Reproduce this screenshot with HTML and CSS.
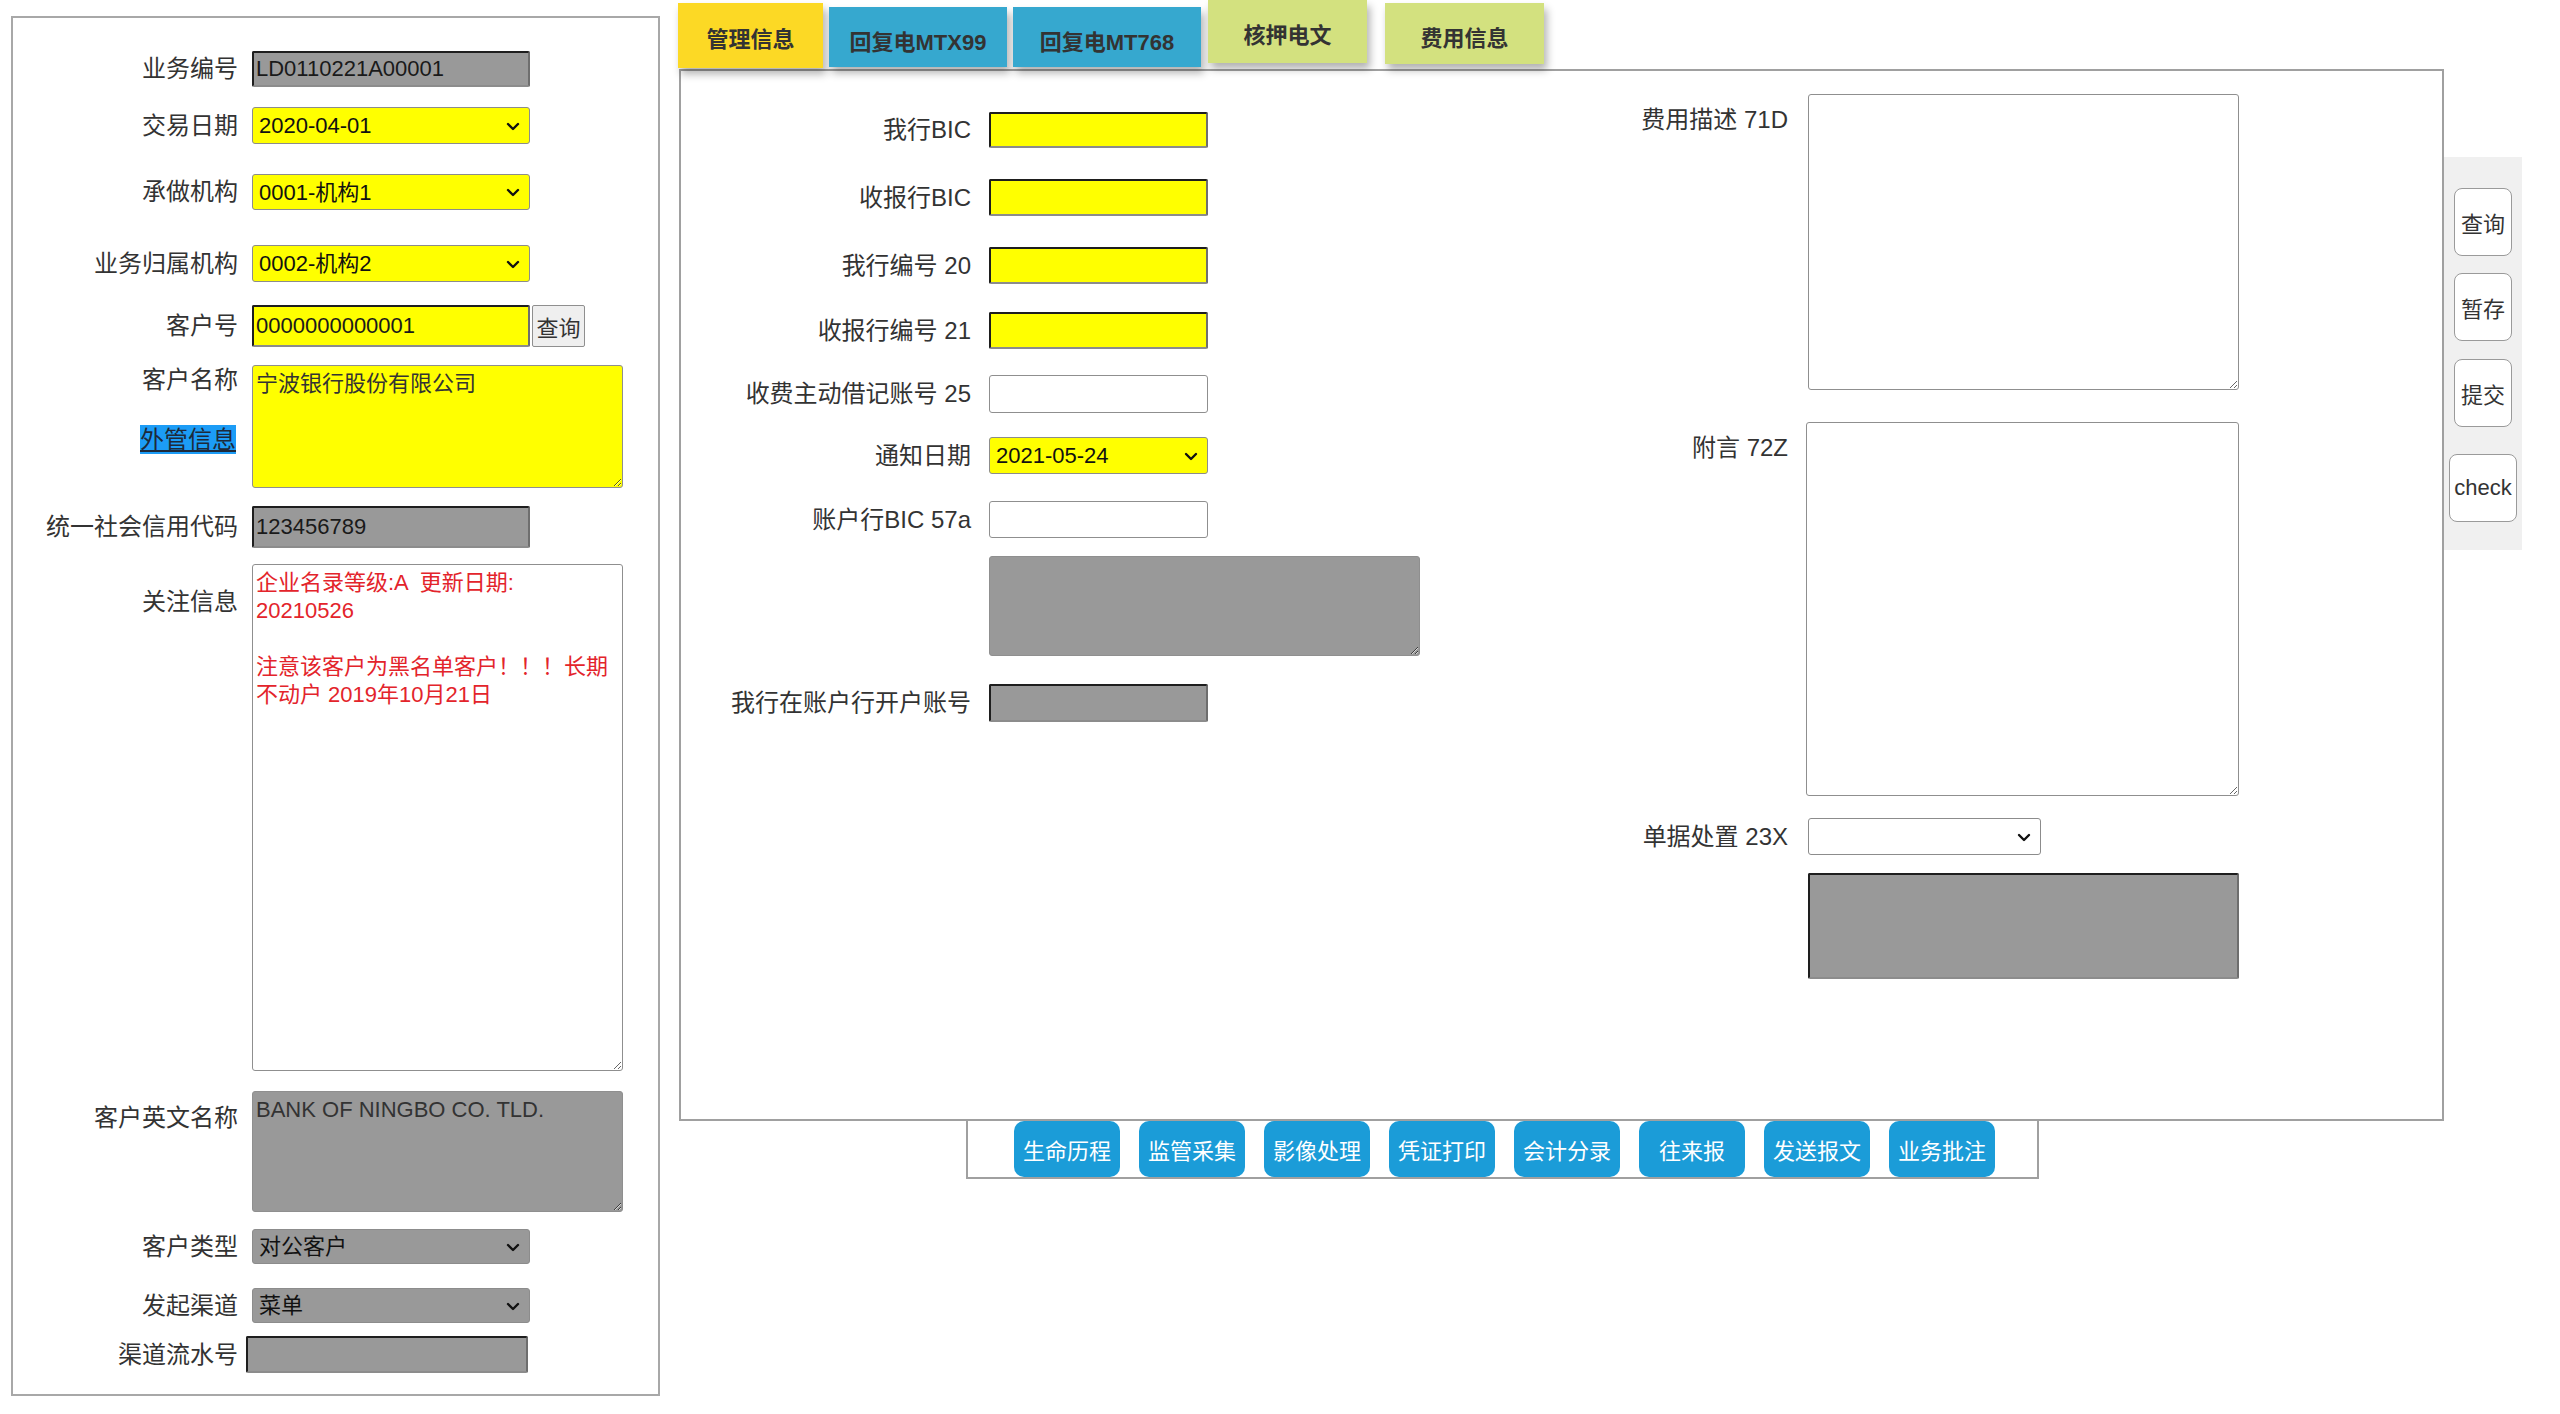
FILE: index.html
```html
<!DOCTYPE html>
<html lang="zh-CN">
<head>
<meta charset="utf-8">
<title>管理信息</title>
<link rel="stylesheet" href="styles.css">
</head>
<body>
<div class="page">
  <aside class="left">
    <div class="frow mt33"><label class="flabel">业务编号</label><input class="inp inset gray w278 h36" value="LD0110221A00001"></div>
    <div class="frow mt20"><label class="flabel">交易日期</label><span class="selwrap"><select class="sel yellow w278 h37"><option>2020-04-01</option></select><svg class="chev" viewBox="0 0 14 9"><path d="M2 2 L7 7 L12 2"/></svg></span></div>
    <div class="frow mt30"><label class="flabel">承做机构</label><span class="selwrap"><select class="sel yellow w278 h36"><option>0001-机构1</option></select><svg class="chev" viewBox="0 0 14 9"><path d="M2 2 L7 7 L12 2"/></svg></span></div>
    <div class="frow mt35"><label class="flabel">业务归属机构</label><span class="selwrap"><select class="sel yellow w278 h37"><option>0002-机构2</option></select><svg class="chev" viewBox="0 0 14 9"><path d="M2 2 L7 7 L12 2"/></svg></span></div>
    <div class="frow mt23"><label class="flabel">客户号</label><input class="inp inset yellow w278 h42" value="0000000000001"><button class="qbtn h42">查询</button></div>
    <div class="frow top mt18">
      <div class="flabel stack"><span>客户名称</span><a class="fx">外管信息</a></div>
      <textarea class="ta yellow w371 h123">宁波银行股份有限公司</textarea>
    </div>
    <div class="frow mt18"><label class="flabel">统一社会信用代码</label><input class="inp inset gray w278 h42" value="123456789"></div>
    <div class="frow top mt16"><label class="flabel pt23">关注信息</label><textarea class="ta red w371 h507">企业名录等级:A  更新日期:
20210526

注意该客户为黑名单客户！！！长期
不动户 2019年10月21日</textarea></div>
    <div class="frow top mt20"><label class="flabel pt12">客户英文名称</label><textarea class="ta gray w371 h121">BANK OF NINGBO CO. TLD.</textarea></div>
    <div class="frow mt17"><label class="flabel">客户类型</label><span class="selwrap"><select class="sel gray w278 h35"><option>对公客户</option></select><svg class="chev" viewBox="0 0 14 9"><path d="M2 2 L7 7 L12 2"/></svg></span></div>
    <div class="frow mt24"><label class="flabel">发起渠道</label><span class="selwrap"><select class="sel gray w278 h35"><option>菜单</option></select><svg class="chev" viewBox="0 0 14 9"><path d="M2 2 L7 7 L12 2"/></svg></span></div>
    <div class="frow mt13"><label class="flabel tight">渠道流水号</label><input class="inp inset gray w282 h37" value=""></div>
  </aside>

  <main class="center">
    <nav class="tabs">
      <div class="tab t1">管理信息</div>
      <div class="tab t2">回复电MTX99</div>
      <div class="tab t3">回复电MT768</div>
      <div class="tab t4">核押电文</div>
      <div class="tab t5">费用信息</div>
    </nav>
    <section class="panel">
      <div class="pcol">
        <div class="frow mt41"><label class="plabel">我行BIC</label><input class="inp inset yellow w219 h36" value=""></div>
        <div class="frow mt31"><label class="plabel">收报行BIC</label><input class="inp inset yellow w219 h37" value=""></div>
        <div class="frow mt31"><label class="plabel">我行编号 20</label><input class="inp inset yellow w219 h37" value=""></div>
        <div class="frow mt28"><label class="plabel">收报行编号 21</label><input class="inp inset yellow w219 h37" value=""></div>
        <div class="frow mt26"><label class="plabel">收费主动借记账号 25</label><input class="inp plain w219 h38" value=""></div>
        <div class="frow mt24"><label class="plabel">通知日期</label><span class="selwrap"><select class="sel yellow w219 h37"><option>2021-05-24</option></select><svg class="chev" viewBox="0 0 14 9"><path d="M2 2 L7 7 L12 2"/></svg></span></div>
        <div class="frow mt27"><label class="plabel">账户行BIC 57a</label><input class="inp plain w219 h37" value=""></div>
        <div class="frow mt18"><span class="plabel"></span><textarea class="ta gray w431 h100"></textarea></div>
        <div class="frow mt28"><label class="plabel">我行在账户行开户账号</label><input class="inp inset gray w219 h38" value=""></div>
      </div>
      <div class="pcol">
        <div class="frow top mt23"><label class="rlabel pt11">费用描述 71D</label><textarea class="ta w431 h296"></textarea></div>
        <div class="frow top mt32"><label class="rlabel pt11">附言 72Z</label><textarea class="ta w432 h374 shiftl"></textarea></div>
        <div class="frow mt22"><label class="rlabel">单据处置 23X</label><span class="selwrap"><select class="sel white w233 h37"><option></option></select><svg class="chev" viewBox="0 0 14 9"><path d="M2 2 L7 7 L12 2"/></svg></span></div>
        <div class="frow mt18"><span class="rlabel"></span><input class="inp inset gray w431 h106" value=""></div>
      </div>
    </section>
    <div class="bbar">
      <button class="bb">生命历程</button>
      <button class="bb">监管采集</button>
      <button class="bb">影像处理</button>
      <button class="bb">凭证打印</button>
      <button class="bb">会计分录</button>
      <button class="bb">往来报</button>
      <button class="bb">发送报文</button>
      <button class="bb">业务批注</button>
    </div>
  </main>

  <div class="side">
    <button class="sbtn">查询</button>
    <button class="sbtn g17">暂存</button>
    <button class="sbtn g18">提交</button>
    <button class="sbtn wide g27">check</button>
  </div>
</div>
</body>
</html>
```

FILE: styles.css
```css
* { box-sizing: border-box; }

body {
  margin: 0;
  background: #fff;
  color: #333;
  font-family: "Liberation Sans", "Noto Sans CJK SC", sans-serif;
}

.page {
  display: flex;
  align-items: flex-start;
  width: 2560px;
}

/* ---------- left panel ---------- */
.left {
  flex: none;
  margin: 16px 0 0 11px;
  width: 649px;
  height: 1380px;
  border: 2px solid #a8a8a8;
}

.frow { display: flex; align-items: center; }
.frow.top { align-items: flex-start; }

.flabel {
  flex: none;
  width: 225px;
  margin-right: 14px;
  text-align: right;
  font-size: 24px;
  line-height: 30px;
  color: #333;
}
.flabel.tight { margin-right: 8px; }

.stack { display: flex; flex-direction: column; align-items: flex-end; }

.fx {
  margin-top: 30px;
  margin-right: 2px;
  line-height: 29px;
  background: #1c9cf6;
  color: #1d2a3a;
  text-decoration: underline;
}

.plabel, .rlabel {
  flex: none;
  width: 290px;
  text-align: right;
  font-size: 24px;
  line-height: 30px;
  color: #333;
}
.plabel { margin-right: 18px; }
.rlabel { margin-right: 20px; }

.pt11 { padding-top: 11px; }
.pt12 { padding-top: 12px; }
.pt23 { padding-top: 23px; }

/* ---------- controls ---------- */
.inp, .sel, .ta, .qbtn {
  font-family: "Liberation Sans", "Noto Sans CJK SC", sans-serif;
  font-size: 22px;
  outline: none;
  flex: none;
}

.inp {
  color: #1a1a1a;
  padding: 0 2px;
  border-radius: 2px;
}
.inset {
  border-style: solid;
  border-width: 2px;
  border-color: #1e1e1e #6e6e6e #8c8c8c #1e1e1e;
}
.plain {
  border: 1px solid #8f8f8f;
  border-radius: 3px;
  background: #fff;
}

.selwrap {
  position: relative;
  display: flex;
  flex: none;
}
.sel {
  -webkit-appearance: none;
  appearance: none;
  color: #111;
  border: 1px solid #8c8c8c;
  border-radius: 3px;
  padding: 0 30px 0 6px;
}
.chev {
  position: absolute;
  right: 10px;
  top: 50%;
  width: 14px;
  height: 9px;
  margin-top: -4px;
  pointer-events: none;
  fill: none;
  stroke: #111;
  stroke-width: 2.4;
  stroke-linecap: round;
  stroke-linejoin: round;
}

.ta {
  color: #333;
  line-height: 28px;
  border: 1px solid #8f8f8f;
  border-radius: 3px;
  padding: 4px 3px;
  background: #fff;
}
.ta.red { color: #e3242b; }

.gray { background: #999; }
.yellow { background: #ff0; }
.white { background: #fff; }

.qbtn {
  width: 53px;
  margin-left: 2px;
  padding: 0;
  color: #333;
  background: #efefef;
  border: 1px solid #8f8f8f;
  border-radius: 2px;
}

.shiftl { margin-left: -2px; }

.w219 { width: 219px; }
.w233 { width: 233px; }
.w278 { width: 278px; }
.w282 { width: 282px; }
.w371 { width: 371px; }
.w431 { width: 431px; }
.w432 { width: 433px; }

.h35 { height: 35px; }
.h36 { height: 36px; }
.h37 { height: 37px; }
.h38 { height: 38px; }
.h42 { height: 42px; }
.h100 { height: 100px; }
.h106 { height: 106px; }
.h121 { height: 121px; }
.h123 { height: 123px; }
.h296 { height: 296px; }
.h374 { height: 374px; }
.h507 { height: 507px; }

.mt13 { margin-top: 13px; }
.mt16 { margin-top: 16px; }
.mt17 { margin-top: 17px; }
.mt18 { margin-top: 18px; }
.mt20 { margin-top: 20px; }
.mt22 { margin-top: 22px; }
.mt23 { margin-top: 23px; }
.mt24 { margin-top: 24px; }
.mt26 { margin-top: 26px; }
.mt27 { margin-top: 27px; }
.mt28 { margin-top: 28px; }
.mt30 { margin-top: 30px; }
.mt31 { margin-top: 31px; }
.mt32 { margin-top: 32px; }
.mt33 { margin-top: 33px; }
.mt35 { margin-top: 35px; }
.mt41 { margin-top: 41px; }

/* ---------- center ---------- */
.center {
  flex: none;
  margin-left: 18px;
  width: 1766px;
}

.tabs {
  display: flex;
  align-items: flex-start;
  height: 69px;
}

.tab {
  flex: none;
  display: flex;
  align-items: center;
  justify-content: center;
  padding-top: 2px;
  font-size: 22px;
  font-weight: bold;
  color: #333;
  box-shadow: 3px 6px 8px rgba(0, 0, 0, 0.3);
}
.t1 { margin-top: 3px; width: 145px; height: 65px; background: #fcd925; }
.t2 { margin-left: 6px; margin-top: 7px; width: 178px; height: 60px; background: #36a8cf; padding-top: 6px; }
.t3 { margin-left: 6px; margin-top: 7px; width: 188px; height: 60px; background: #36a8cf; padding-top: 6px; }
.t4 { margin-left: 7px; margin-top: 0; width: 159px; height: 63px; background: #d3e17f; }
.t5 { margin-left: 18px; margin-top: 3px; width: 159px; height: 61px; background: #d3e17f; padding-top: 4px; }

.panel {
  margin-left: 1px;
  width: 1765px;
  height: 1052px;
  border: 2px solid #a0a0a0;
  display: grid;
  grid-template-columns: 817px 1fr;
  align-items: start;
}

.bbar {
  margin-left: 288px;
  width: 1073px;
  height: 58px;
  border: 2px solid #a0a0a0;
  border-top: none;
  display: flex;
  gap: 19px;
  padding-left: 46px;
}

.bb {
  flex: none;
  width: 106px;
  height: 56px;
  padding: 0;
  border: none;
  border-radius: 10px;
  background: #1b9cd8;
  color: #fff;
  font-family: "Liberation Sans", "Noto Sans CJK SC", sans-serif;
  font-size: 22px;
}

/* ---------- right side strip ---------- */
.side {
  flex: none;
  margin-top: 157px;
  width: 78px;
  height: 393px;
  background: #f0f0f0;
  display: flex;
  flex-direction: column;
  align-items: center;
  padding-top: 31px;
}

.sbtn {
  flex: none;
  width: 58px;
  height: 68px;
  padding: 0;
  background: #fff;
  border: 1px solid #9a9a9a;
  border-radius: 8px;
  color: #333;
  font-family: "Liberation Sans", "Noto Sans CJK SC", sans-serif;
  font-size: 22px;
}
.sbtn.wide { width: 68px; }
.g17 { margin-top: 17px; }
.g18 { margin-top: 18px; }
.g27 { margin-top: 27px; }
```
